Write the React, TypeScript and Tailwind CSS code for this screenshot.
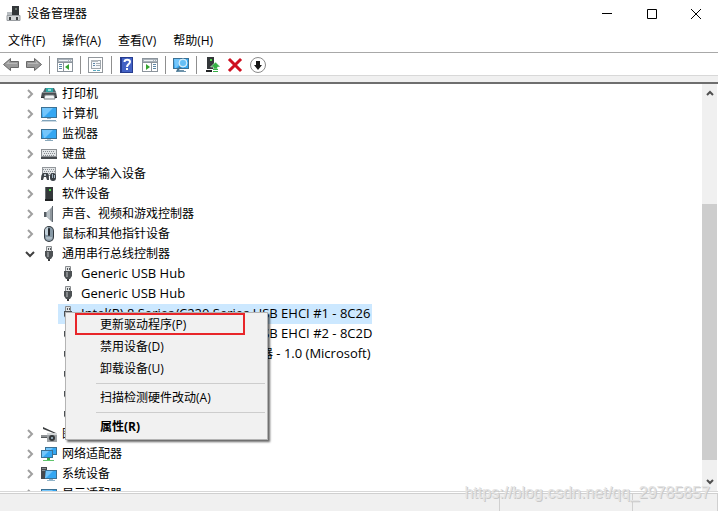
import type { ReactNode } from "react";

function Svg({ children, w = 16, h = 16 }: { children: ReactNode; w?: number; h?: number }) {
  return (
    <svg width={w} height={h} viewBox={`0 0 ${w} ${h}`} className="block shrink-0" aria-hidden="true">
      {children}
    </svg>
  );
}

/* ---------- Tree icons ---------- */

function PrinterIcon() {
  return (
    <Svg>
      <path d="M4 2h9l2 4H2z" fill="#4f6a70" />
      <path d="M5 2h7v4H5z" fill="#2fa7a6" />
      <path d="M7 3h3v2H7z" fill="#8ee0d6" />
      <path d="M1 6h14l1 5h-3V9H4v2H0z" fill="#4b4f52" />
      <path d="M1 6h14v1H1z" fill="#8a9094" />
      <path d="M4 9h9l1 4H3z" fill="#f4f6f7" stroke="#777d80" strokeWidth="1" />
      <path d="M0 11h3v1H0zM14 11h2v1h-2z" fill="#2c2f31" />
    </Svg>
  );
}

function ScreenFill({ x, y, w, h }: { x: number; y: number; w: number; h: number }) {
  return (
    <>
      <rect x={x} y={y} width={w} height={h} fill="#3c7194" />
      <rect x={x + 1} y={y + 1} width={w - 2} height={h - 2} fill="#35a7f2" />
      <path d={`M${x + 1} ${y + 1}h${w - 5}l-${h - 2} ${h - 2}h-1z`} fill="#74c6fb" />
    </>
  );
}

function ComputerIcon() {
  return (
    <Svg>
      <ScreenFill x={0} y={1} w={16} h={11} />
      <path d="M6 12h4v1H6z" fill="#9db2bf" />
      <path d="M1 14h14v1H1z" fill="#7fa3bb" />
      <path d="M0 15h16v1H0z" fill="#cbd9e2" />
    </Svg>
  );
}

function MonitorIcon() {
  return (
    <Svg>
      <ScreenFill x={0} y={3} w={16} h={10} />
      <path d="M6 13h4v1H6z" fill="#b9c6cd" />
      <path d="M4 14h8v1H4z" fill="#8aa9bc" />
    </Svg>
  );
}

function KeyboardIcon() {
  return (
    <Svg>
      <rect x="0" y="3" width="16" height="10" fill="#8b8f93" />
      <rect x="1" y="4" width="14" height="6" fill="#e3e6e8" />
      <path d="M2 5.5h12M3 7.5h11M2 9.5h12" stroke="#878c91" strokeDasharray="1 1" />
      <path d="M0 11h16v2H0z" fill="#45494d" />
    </Svg>
  );
}

function HidIcon() {
  return (
    <Svg>
      <rect x="1" y="1" width="14" height="9" fill="#93979b" />
      <rect x="2" y="2" width="12" height="7" fill="#e3e6e8" />
      <path d="M2 3.5h12M3 5.5h11M2 7.5h12" stroke="#878c91" strokeDasharray="1 1" />
      <path d="M0 14c0-5 1-7 3-7h3c2 0 2 3 2 7H6l-1-3H3l-1 3z" fill="#3f4448" />
      <path d="M3 8h2v2H3z" fill="#b9c2c8" />
      <rect x="9" y="7" width="6" height="8" rx="3" fill="#3a4046" />
      <path d="M11 8h1v4h-1zM13 9h1v3h-1z" fill="#a8b8c4" />
    </Svg>
  );
}

function SoftwareIcon() {
  return (
    <Svg>
      <path d="M4 1h8v13H4z" fill="#34383a" />
      <path d="M4 1h1v13H4z" fill="#6a6f72" />
      <rect x="8" y="3" width="2" height="2" fill="#4fe04a" />
      <path d="M4 13h8v2H4z" fill="#202223" />
    </Svg>
  );
}

function SpeakerIcon() {
  return (
    <Svg>
      <path d="M3 6h3l5-5v15l-5-5H3z" fill="#8f979d" />
      <path d="M3 6h2v5H3z" fill="#565d63" />
      <path d="M6 6l3-3v10l-3-2z" fill="#b9c1c6" />
      <path d="M11 0h1v16h-1z" fill="#5f676e" />
    </Svg>
  );
}

function MouseIcon() {
  return (
    <Svg>
      <rect x="3" y="0" width="10" height="16" rx="5" fill="#32383e" />
      <rect x="4" y="1" width="8" height="14" rx="4" fill="#8799a6" />
      <path d="M4 8V5a4 4 0 0 1 3-4v8H5z" fill="#c2d0d9" />
      <rect x="7" y="2" width="2" height="8" rx="1" fill="#272c31" />
      <path d="M5 11h6v1c0 2-6 2-6 0z" fill="#aebbc4" />
    </Svg>
  );
}

function UsbIcon() {
  return (
    <Svg>
      <path d="M5.5.5h5v5h-5z" fill="#e1e3e4" stroke="#888c8f" />
      <path d="M7 2h1v2H7zM9 2h1v2H9z" fill="#55595c" />
      <path d="M4 5h8v5l-2 3H6l-2-3z" fill="#4d5154" />
      <path d="M6 6h2v5H6z" fill="#85898c" />
      <path d="M7 13h2v2H7z" fill="#37393b" />
    </Svg>
  );
}

function ImagingIcon() {
  return (
    <Svg>
      <path d="M2 1l13 6v1L2 3z" fill="#3b3e40" />
      <path d="M0 9h7v3H0z" fill="#8d9194" />
      <path d="M0 11h7v1H0z" fill="#54585b" />
      <rect x="6" y="7" width="10" height="9" fill="#9da1a4" />
      <path d="M6 7h10v2H6z" fill="#d3d6d8" />
      <circle cx="11" cy="12" r="3" fill="#33373a" />
      <circle cx="11" cy="12" r="1" fill="#a9c3d5" />
    </Svg>
  );
}

function NetworkIcon() {
  return (
    <Svg>
      <ScreenFill x={4} y={1} w={12} h={8} />
      <ScreenFill x={0} y={4} w={12} h={8} />
      <path d="M6 12h3v2h3v1H3v-1h3z" fill="#39a94a" />
      <path d="M2 14h11v1H2z" fill="#5ec46b" />
    </Svg>
  );
}

function SystemIcon() {
  return (
    <Svg>
      <path d="M0 1h6v12H0z" fill="#45494d" />
      <path d="M1 2h4v1H1zM1 4h4v1H1z" fill="#878d91" />
      <ScreenFill x={4} y={4} w={12} h={9} />
      <path d="M8 13h4v1H8zM6 14h8v1H6z" fill="#91b4c9" />
    </Svg>
  );
}

/* ---------- Toolbar icons ---------- */

function ArrowIcon({ forward = false }: { forward?: boolean }) {
  return (
    <Svg>
      <path
        d={forward ? "M8.5 1.5v3h-8v6h8v3l7-6z" : "M7.5 1.5v3h8v6h-8v3l-7-6z"}
        fill="#9a9a9a"
        stroke="#686868"
        strokeLinejoin="round"
      />
      <path d={forward ? "M2 6h8V4l3 3H2z" : "M14 6H6V4L3 7h11z"} fill="#b9b9b9" />
    </Svg>
  );
}

function PaneIcon({ flip = false }: { flip?: boolean }) {
  return (
    <Svg>
      <rect x=".5" y="1.5" width="15" height="13" fill="#fff" stroke="#8c949c" />
      <path d="M1 2h14v3H1z" fill="#a9b2ba" />
      <path d="M2 3h9v1H2zM12 3h1v1h-1zM14 3h1v1h-1z" fill="#eef1f3" />
      <path d="M1 5h14v1H1z" fill="#8c949c" />
      {flip ? (
        <>
          <path d="M9 6h1v8H9z" fill="#8c949c" />
          <path d="M11 7h3v1h-3zM11 9h3v1h-3zM11 11h3v1h-3z" fill="#5d87a8" />
          <path d="M4 7l4 3-4 3z" fill="#36a430" />
        </>
      ) : (
        <>
          <path d="M6 6h1v8H6z" fill="#8c949c" />
          <path d="M2 7h3v1H2zM2 9h3v1H2zM2 11h3v1H2z" fill="#5d87a8" />
          <path d="M12 7l-4 3 4 3z" fill="#36a430" />
        </>
      )}
    </Svg>
  );
}

function PropertiesIcon() {
  return (
    <Svg>
      <rect x=".5" y=".5" width="14" height="15" fill="#fff" stroke="#92979c" />
      <rect x="3.5" y="3.5" width="9" height="8" fill="#f6f8fa" stroke="#9fa6ac" />
      <path d="M3 3h7v2H3z" fill="#b4babf" />
      <path d="M5 6h2v1H5zM5 8h2v1H5z" fill="#5d87a8" />
      <path d="M8 6h4v1H8zM8 8h4v1H8z" fill="#aab0b5" />
      <path d="M5 13h3v1H5zM9 13h3v1H9z" fill="#58a9bf" />
    </Svg>
  );
}

function HelpIcon() {
  return (
    <Svg>
      <rect x="1" y="0" width="13" height="16" fill="#263c8f" />
      <rect x="3" y="1" width="10" height="14" fill="#4362c5" />
      <path d="M5.5 5c0-3 5.5-3 5.5 0 0 2-3 2-3 5" fill="none" stroke="#fff" strokeWidth="2" />
      <rect x="7" y="11" width="2" height="2" fill="#fff" />
    </Svg>
  );
}

function ScanIcon() {
  return (
    <Svg>
      <ScreenFill x={0} y={1} w={16} h={11} />
      <path d="M5 13h6v1H5zM3 14h10v1H3z" fill="#6d93ab" />
      <path d="M8 9l-4 5" stroke="#44738f" strokeWidth="2" />
      <circle cx="10" cy="6" r="4" fill="#aee0fc" stroke="#d8edf8" />
      <circle cx="10" cy="6" r="3" fill="#65bef5" />
    </Svg>
  );
}

function UpdateIcon() {
  return (
    <Svg>
      <path d="M3 0h7v12H3z" fill="#34383a" />
      <path d="M6 2h2v2H6z" fill="#4fe04a" />
      <path d="M2 13h6v2H2z" fill="#232526" />
      <path d="M11.5 5l5 5h-3v2h-4v-2h-3z" fill="#35b045" stroke="#fff" strokeWidth=".5" />
      <path d="M9 12h5v1H9zM9 14h5v1H9z" fill="#35b045" />
    </Svg>
  );
}

function RemoveIcon() {
  return (
    <Svg>
      <path d="M3 3l10 10M13 3L3 13" stroke="#cf1020" strokeWidth="3" strokeLinecap="square" />
    </Svg>
  );
}

function DisableIcon() {
  return (
    <Svg>
      <circle cx="8" cy="8" r="7.5" fill="#fff" stroke="#8b8b8b" />
      <path d="M6 4h4v4h2l-4 5-4-5h2z" fill="#161616" />
    </Svg>
  );
}

function AppIcon() {
  return (
    <Svg>
      <path d="M6 0h7v9H6z" fill="#33373a" />
      <rect x="9" y="2" width="2" height="2" fill="#67756c" />
      <path d="M1 6h5v3H1z" fill="#b7bcc0" />
      <path d="M1 9.5h13v5H1z" fill="#d3d6d8" stroke="#989ca0" />
      <path d="M3 11h2v3H3zM10 11h2v3h-2z" fill="#3c4043" />
    </Svg>
  );
}

/* ---------- Data ---------- */

type Leaf = { name: ReactNode; selected?: boolean };
type Category = { name: string; icon: ReactNode; children?: Leaf[] };

const categories: Category[] = [
  { name: "打印机", icon: <PrinterIcon /> },
  { name: "计算机", icon: <ComputerIcon /> },
  { name: "监视器", icon: <MonitorIcon /> },
  { name: "键盘", icon: <KeyboardIcon /> },
  { name: "人体学输入设备", icon: <HidIcon /> },
  { name: "软件设备", icon: <SoftwareIcon /> },
  { name: "声音、视频和游戏控制器", icon: <SpeakerIcon /> },
  { name: "鼠标和其他指针设备", icon: <MouseIcon /> },
  {
    name: "通用串行总线控制器",
    icon: <UsbIcon />,
    children: [
      { name: "Generic USB Hub" },
      { name: "Generic USB Hub" },
      { name: "Intel(R) 8 Series/C220 Series USB EHCI #1 - 8C26", selected: true },
      { name: "Intel(R) 8 Series/C220 Series USB EHCI #2 - 8C2D" },
      {
        name: (
          <>
            Intel(R) USB 3.0 <span className="text-xs">可扩展主机控制器</span> - 1.0 (Microsoft)
          </>
        ),
      },
      { name: "USB Root Hub" },
      { name: "USB Root Hub" },
      { name: "USB Root Hub" },
    ],
  },
  { name: "图像设备", icon: <ImagingIcon /> },
  { name: "网络适配器", icon: <NetworkIcon /> },
  { name: "系统设备", icon: <SystemIcon /> },
  { name: "显示适配器", icon: <MonitorIcon /> },
];

const tools: (null | { label: string; icon: ReactNode })[] = [
  { label: "后退", icon: <ArrowIcon /> },
  { label: "前进", icon: <ArrowIcon forward /> },
  null,
  { label: "显示/隐藏控制台树", icon: <PaneIcon /> },
  null,
  { label: "属性", icon: <PropertiesIcon /> },
  null,
  { label: "帮助", icon: <HelpIcon /> },
  { label: "显示/隐藏操作窗格", icon: <PaneIcon flip /> },
  null,
  { label: "扫描检测硬件改动", icon: <ScanIcon /> },
  null,
  { label: "更新驱动程序", icon: <UpdateIcon /> },
  { label: "卸载设备", icon: <RemoveIcon /> },
  { label: "禁用设备", icon: <DisableIcon /> },
];

/* ---------- Parts ---------- */

function TitleBar() {
  return (
    <header className="flex h-7 items-center pl-1.5">
      <AppIcon />
      <h1 className="ml-[5px] flex-1 text-xs">设备管理器</h1>
      <button aria-label="最小化" className="flex h-7 w-[45px] items-center justify-center">
        <Svg w={10} h={10}><path d="M0 4h10v1H0z" fill="#000" /></Svg>
      </button>
      <button aria-label="最大化" className="flex h-7 w-[45px] items-center justify-center">
        <Svg w={10} h={10}><path d="M.5.5h9v9h-9z" fill="none" stroke="#000" /></Svg>
      </button>
      <button aria-label="关闭" className="flex h-7 w-11 items-center justify-center">
        <Svg w={10} h={10}><path d="M0 0l10 10M10 0L0 10" stroke="#000" /></Svg>
      </button>
    </header>
  );
}

function MenuBar() {
  return (
    <nav className="flex h-6 items-center gap-[17px] px-2 pt-0.5">
      {["文件(F)", "操作(A)", "查看(V)", "帮助(H)"].map((m) => (
        <button key={m}>{m}</button>
      ))}
    </nav>
  );
}

function Toolbar() {
  return (
    <div
      role="toolbar"
      className="flex h-6 items-center gap-[7px] border-y border-t-[#a8a8a8] border-b-[#d8d8d8] px-[3px] pt-0.5"
    >
      {tools.map((t, i) =>
        t ? (
          <button key={i} aria-label={t.label}>
            {t.icon}
          </button>
        ) : (
          <span key={i} className="h-[18px] w-px bg-[#8f8f8f]" />
        )
      )}
    </div>
  );
}

function ContextMenu() {
  const item = "block h-[22px] w-full pl-[34px] text-left";
  const rule = "my-[3px] mr-0.5 ml-[30px] border-[#cdcdcd]";
  return (
    <div
      role="menu"
      className="absolute top-2 left-[7px] z-10 w-[203px] border border-[#b4b4b4] bg-[#f1f1f1] py-px text-xs shadow-[2px_2px_2px_#00000099]"
    >
      <button role="menuitem" className={`${item} relative`}>
        更新驱动程序(P)
        <span className="absolute -top-px right-[22px] bottom-px left-[9px] border-2 border-[#e8262a]" />
      </button>
      <button role="menuitem" className={item}>禁用设备(D)</button>
      <button role="menuitem" className={item}>卸载设备(U)</button>
      <hr className={rule} />
      <button role="menuitem" className={item}>扫描检测硬件改动(A)</button>
      <hr className={rule} />
      <button role="menuitem" className={`${item} font-bold`}>属性(R)</button>
    </div>
  );
}

function Chevron({ open }: { open: boolean }) {
  return (
    <Svg w={10} h={10}>
      {open ? (
        <path d="M1 3l4 4 4-4" fill="none" stroke="#404040" strokeWidth="2" />
      ) : (
        <path d="M3 1l4 4-4 4" fill="none" stroke="#a0a0a0" strokeWidth="2" />
      )}
    </Svg>
  );
}

function DeviceTree() {
  return (
    <ul role="tree" className="min-w-0 flex-1 overflow-hidden pl-[25px]">
      {categories.map((c) => (
        <li key={c.name} role="treeitem" aria-expanded={!!c.children}>
          <div className="flex h-5 items-center whitespace-nowrap">
            <button aria-label={c.name} className="mr-1.5">
              <Chevron open={!!c.children} />
            </button>
            {c.icon}
            <span className="ml-[5px]">{c.name}</span>
          </div>
          {c.children && (
            <ul role="group" className="pl-[33px] text-[13px]">
              {c.children.map((d, i) => (
                <li key={i} role="treeitem" className="relative">
                  <div
                    className={`flex h-5 w-fit items-center pr-0.5 pl-0.5 whitespace-nowrap ${d.selected ? "bg-[#cce8ff]" : ""}`}
                  >
                    <UsbIcon />
                    <span className="ml-[5px]">{d.name}</span>
                  </div>
                  {d.selected && <ContextMenu />}
                </li>
              ))}
            </ul>
          )}
        </li>
      ))}
    </ul>
  );
}

function ScrollBar() {
  return (
    <div className="mr-px flex w-[15px] flex-col bg-[#f0f0f0]">
      <button aria-label="向上滚动" className="flex h-[18px] items-center justify-center">
        <Svg w={8} h={8}><path d="M1 6l3-3 3 3" fill="none" stroke="#505050" strokeWidth="2" /></Svg>
      </button>
      <div className="grow-[102]" />
      <div className="grow-[257] bg-[#cdcdcd]" />
      <div className="grow-[13]" />
      <button aria-label="向下滚动" className="flex h-[18px] items-center justify-center">
        <Svg w={8} h={8}><path d="M1 2l3 3 3-3" fill="none" stroke="#505050" strokeWidth="2" /></Svg>
      </button>
    </div>
  );
}

export default function App() {
  return (
    <div className="relative flex h-screen flex-col overflow-hidden bg-white font-['Open_Sans','Noto_Sans_CJK_SC',sans-serif] text-xs text-black">
      <TitleBar />
      <MenuBar />
      <Toolbar />
      <div className="h-1.5 shrink-0 bg-[#f0f0f0]" />
      <main className="flex min-h-0 flex-1 border-t-2 border-[#6e6e6e]">
        <DeviceTree />
        <ScrollBar />
      </main>
      <footer className="flex h-5 shrink-0 border-t border-[#d8d8d8] pt-px">
        <div className="flex flex-1 border-t border-[#d0d0d0] bg-[#f0f0f0]">
          <div className="flex-1 border-r border-[#d0d0d0]" />
          <div className="w-[133px] border-r border-[#d0d0d0]" />
          <div className="w-[85px] border-r border-[#d0d0d0]" />
        </div>
      </footer>
      <p className="absolute right-2 bottom-1.5 font-['Liberation_Sans',sans-serif] text-base leading-6 text-[#e4e4e4] [text-shadow:1px_1px_0_#c8c8c8]">
        https://blog.csdn.net/qq_29785857
      </p>
    </div>
  );
}
